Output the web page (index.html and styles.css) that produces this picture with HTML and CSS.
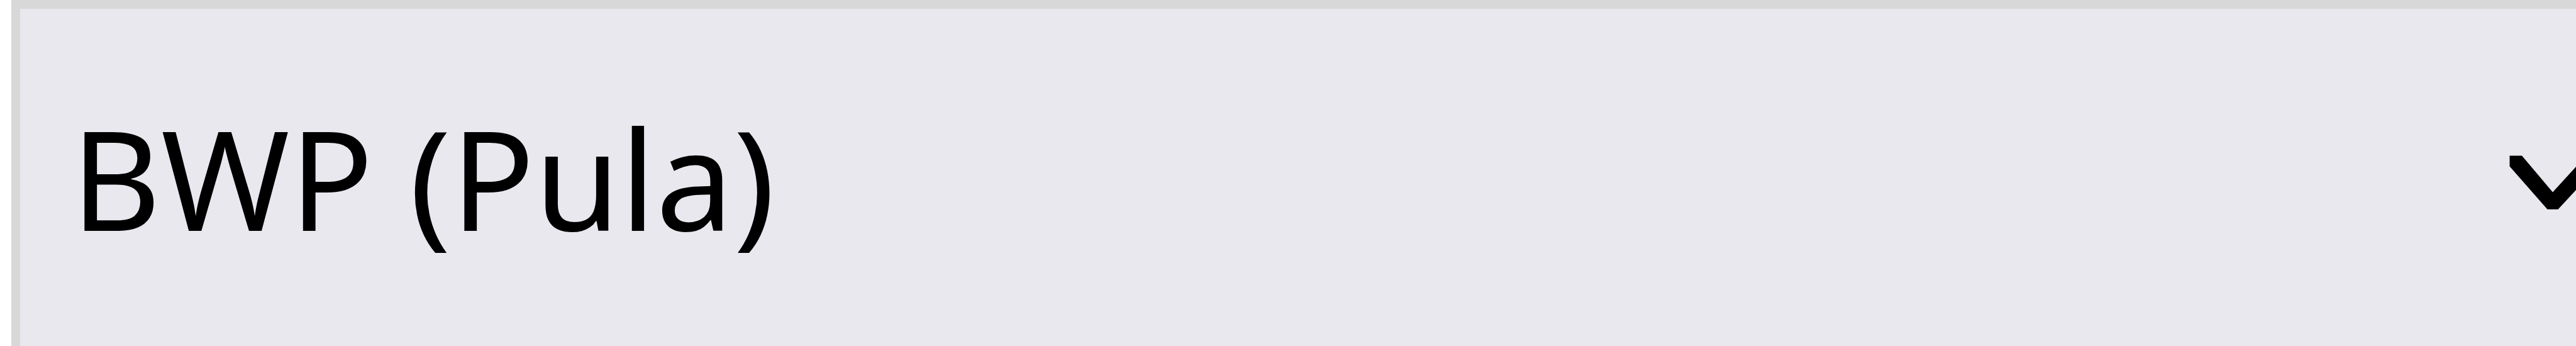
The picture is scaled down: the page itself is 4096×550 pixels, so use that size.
FILE: index.html
```html
<!DOCTYPE html>
<html lang="en">
<head>
<meta charset="utf-8">
<title>Currency</title>
<link rel="stylesheet" href="styles.css">
</head>
<body>
<div class="select">
<span class="label">BWP (Pula)</span>
<svg class="chevron" viewBox="0 0 106 86" aria-hidden="true"><path d="M.5.5H20L69 58.5 106 18V55L77.5 85.7H60.5L.5 17.5Z"/></svg>
</div>
</body>
</html>
```
FILE: styles.css
```css
html, body { margin: 0; height: 100%; overflow: hidden; background: #fff; }
.select {
  box-sizing: border-box;
  height: 550px;
  margin-left: 18px;
  padding-left: 81px;
  border-top: 14px solid #d8d8d8;
  border-left: 14px solid #d8d8d8;
  background: #e9e8ee;
  display: flex;
  align-items: center;
  justify-content: space-between;
}
.label { font: 220px "Noto Sans", sans-serif; white-space: pre; color: #000; padding-bottom: 2px; }
.chevron { width: 106px; height: 86px; flex: none; margin-top: 16px; fill: #000; }
```
